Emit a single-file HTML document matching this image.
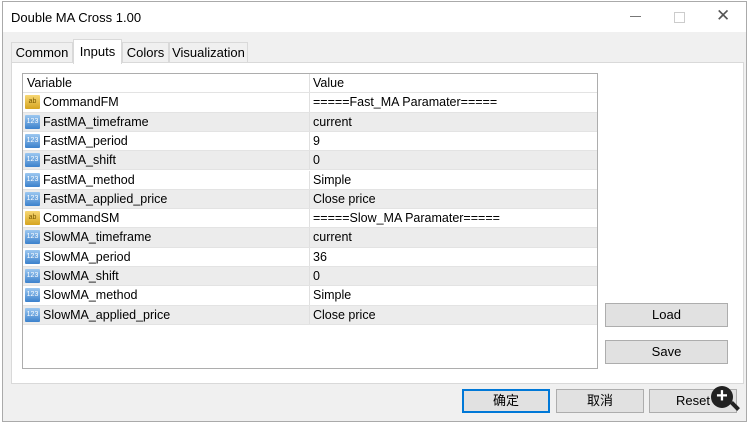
<!DOCTYPE html>
<html><head><meta charset="utf-8"><style>
body{margin:0;width:750px;height:426px;overflow:hidden;background:#fff;font-family:"Liberation Sans","Noto Sans CJK SC",sans-serif;font-size:12.5px;color:#000;position:relative}
.dlg{position:absolute;left:2px;top:1px;width:745px;height:421px;background:#f0f0f0;border:1px solid #aaa;box-sizing:border-box}
.title{position:absolute;left:0;top:0;right:0;height:30px;background:#fff}
.title span{position:absolute;left:8px;top:8px;font-size:13px}
.tab{position:absolute;top:40px;height:20px;border:1px solid #d9d9d9;border-bottom:none;background:#f0f0f0;font-size:13px;line-height:20px;text-align:center}
.panel{position:absolute;left:8px;top:60px;width:733px;height:322px;background:#fff;border:1px solid #d9d9d9;box-sizing:border-box}
.tbl{position:absolute;left:19px;top:71px;width:576px;height:296px;border:1px solid #adadad;box-sizing:border-box;background:#fff}
.row{position:absolute;left:0;width:574px;height:19.3px;line-height:19px;border-bottom:1px solid #e3e3e3;box-sizing:border-box}
.g{background:#ececec}
.c1{position:absolute;left:20px}
.c2{position:absolute;left:286px;top:0;bottom:0;border-left:1px solid #e0e0e0;padding-left:3px}
.ic{position:absolute;left:2px;top:2px;width:15px;height:14px;font-size:7px;line-height:14px;text-align:center;border-radius:1px}
.ab{background:linear-gradient(#f7d774,#d6a520);color:#7a5a00}
.n{background:linear-gradient(#9cc8f0,#3c82cc);color:#fff}
.btn{position:absolute;height:24px;background:#e1e1e1;border:1px solid #adadad;box-sizing:border-box;text-align:center;line-height:22px;font-size:13px}
</style></head><body>
<div class="dlg">
<div class="title"><span>Double MA Cross 1.00</span>
<div style="position:absolute;left:627px;top:14px;width:11px;height:1px;background:#777"></div>
<div style="position:absolute;left:671px;top:10px;width:9px;height:9px;border:1px solid #ccc"></div>
<div style="position:absolute;left:713px;top:4px;font-size:17px;color:#555">✕</div>
</div>
<div class="tab" style="left:8px;width:60px">Common</div>
<div class="tab" style="left:70px;top:37px;height:24px;width:47px;background:#fff;line-height:24px;z-index:2">Inputs</div>
<div class="tab" style="left:119px;width:45px">Colors</div>
<div class="tab" style="left:166px;width:77px">Visualization</div>
<div class="panel"></div>
<div class="tbl">
<div class="row" style="top:0;border-bottom:1px solid #e3e3e3"><span class="c1" style="left:4px">Variable</span><span class="c2">Value</span></div>
<div class="row" style="top:19.3px"><span class="ic ab">ab</span><span class="c1">CommandFM</span><span class="c2">=====Fast_MA Paramater=====</span></div>
<div class="row g" style="top:38.6px"><span class="ic n">123</span><span class="c1">FastMA_timeframe</span><span class="c2">current</span></div>
<div class="row" style="top:57.9px"><span class="ic n">123</span><span class="c1">FastMA_period</span><span class="c2">9</span></div>
<div class="row g" style="top:77.2px"><span class="ic n">123</span><span class="c1">FastMA_shift</span><span class="c2">0</span></div>
<div class="row" style="top:96.5px"><span class="ic n">123</span><span class="c1">FastMA_method</span><span class="c2">Simple</span></div>
<div class="row g" style="top:115.8px"><span class="ic n">123</span><span class="c1">FastMA_applied_price</span><span class="c2">Close price</span></div>
<div class="row" style="top:135.1px"><span class="ic ab">ab</span><span class="c1">CommandSM</span><span class="c2">=====Slow_MA Paramater=====</span></div>
<div class="row g" style="top:154.4px"><span class="ic n">123</span><span class="c1">SlowMA_timeframe</span><span class="c2">current</span></div>
<div class="row" style="top:173.7px"><span class="ic n">123</span><span class="c1">SlowMA_period</span><span class="c2">36</span></div>
<div class="row g" style="top:193px"><span class="ic n">123</span><span class="c1">SlowMA_shift</span><span class="c2">0</span></div>
<div class="row" style="top:212.3px"><span class="ic n">123</span><span class="c1">SlowMA_method</span><span class="c2">Simple</span></div>
<div class="row g" style="top:231.6px"><span class="ic n">123</span><span class="c1">SlowMA_applied_price</span><span class="c2">Close price</span></div>
</div>
<div class="btn" style="left:602px;top:301px;width:123px">Load</div>
<div class="btn" style="left:602px;top:338px;width:123px">Save</div>
<div class="btn" style="left:459px;top:387px;width:88px;border:1px solid #0078d7;box-shadow:inset 0 0 0 1px #0078d7">确定</div>
<div class="btn" style="left:553px;top:387px;width:88px">取消</div>
<div class="btn" style="left:646px;top:387px;width:88px">Reset</div>
<div style="position:absolute;left:708px;top:384px;width:22px;height:22px;border-radius:50%;background:#222;color:#fff;font-size:20px;line-height:21px;text-align:center;font-weight:bold">+</div>
<div style="position:absolute;left:727px;top:402px;width:10px;height:4px;background:#222;transform:rotate(45deg)"></div>
</div>
</body></html>
